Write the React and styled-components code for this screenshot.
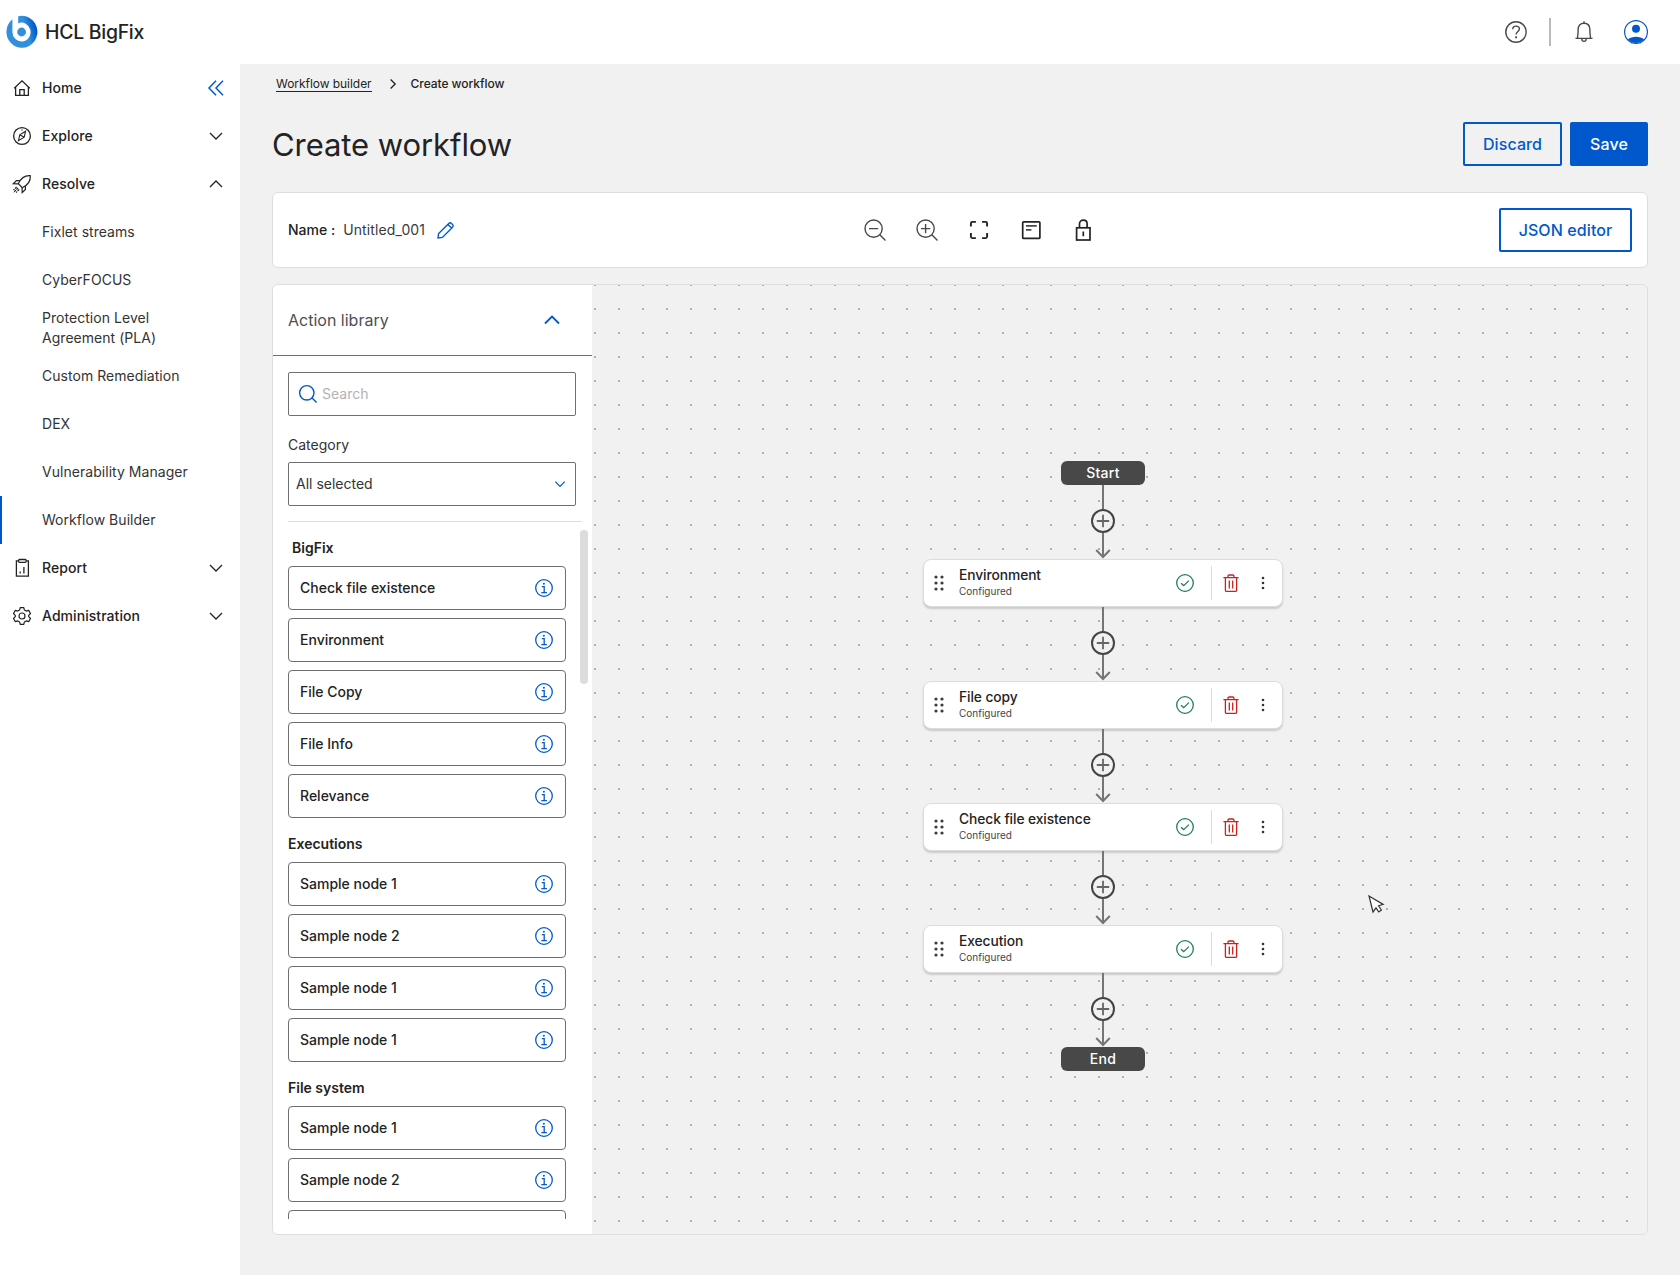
import React from "react";
import styled, { createGlobalStyle, css } from "styled-components";

const blue = "#0059cc";
const dark = "#232323";

const GlobalStyle = createGlobalStyle`
  * {
    box-sizing: border-box;
  }
  body {
    margin: 0;
    background: #f1f1f1;
    color: ${dark};
    font-family: Inter, "Liberation Sans", sans-serif;
    font-size: 14px;
    line-height: 20px;
  }
  svg {
    display: block;
    flex-shrink: 0;
    overflow: visible;
  }
`;

const Page = styled.div`
  height: 1275px;
  display: flex;
  flex-direction: column;
  overflow: hidden;
`;

const Header = styled.header`
  height: 64px;
  flex-shrink: 0;
  display: flex;
  align-items: center;
  justify-content: space-between;
  padding: 0 32px 0 6px;
  background: #fff;
`;

const Brand = styled.div`
  display: flex;
  align-items: center;
  gap: 8px;
  font-size: 19.4px;
  font-weight: 450;
  letter-spacing: -0.25px;
`;

const HeaderTools = styled.div`
  display: flex;
  align-items: center;
`;

const HeaderLine = styled.div`
  width: 2px;
  height: 28px;
  margin: 0 24px 0 22px;
  background: #bababa;
`;

const Profile = styled.div`
  margin-left: 31px;
`;

const Body = styled.div`
  flex: 1;
  display: flex;
  min-height: 0;
`;

const Sidebar = styled.nav`
  width: 240px;
  flex-shrink: 0;
  background: #fff;
`;

const NavRow = styled.div`
  height: 48px;
  display: flex;
  align-items: center;
  padding: 0 16px 0 12px;
  font-weight: 500;
`;

const NavLabel = styled.span`
  flex: 1;
  margin-left: 10px;
  letter-spacing: 0.06px;
`;

const NavSub = styled.div`
  height: 48px;
  display: flex;
  align-items: center;
  padding-left: 42px;
  white-space: pre;
  color: #333;
  letter-spacing: 0.04px;
  ${(props) =>
    props.$active &&
    css`
      padding-left: 40px;
      border-left: 2px solid ${blue};
    `}
`;

const Main = styled.main`
  flex: 1;
  min-width: 0;
  padding: 10px 32px 40px;
`;

const Crumbs = styled.div`
  display: flex;
  align-items: center;
  height: 20px;
  padding-left: 4px;
  font-size: 12px;
  letter-spacing: -0.05px;
`;

const CrumbLink = styled.span`
  line-height: 15px;
  border-bottom: 1px solid ${dark};
`;

const CrumbIcon = styled.span`
  margin: 0 15px 0 18px;
`;

const CrumbCurrent = styled.span`
  font-weight: 500;
`;

const TitleRow = styled.div`
  display: flex;
  align-items: center;
  justify-content: space-between;
  height: 44px;
  margin-top: 28px;
`;

const Title = styled.h1`
  margin: 0;
  padding-top: 2px;
  font-size: 31px;
  font-weight: 380;
  line-height: 40px;
  letter-spacing: -0.07px;
`;

const Buttons = styled.div`
  display: flex;
  gap: 8px;
`;

const Button = styled.button`
  width: ${(props) => props.$width}px;
  height: 44px;
  padding: 0;
  border: 2px solid ${blue};
  border-radius: 2px;
  background: ${(props) => (props.$filled ? blue : "transparent")};
  color: ${(props) => (props.$filled ? "#fff" : blue)};
  font-family: inherit;
  font-size: 16px;
  font-weight: 480;
  letter-spacing: 0.1px;
`;

const Toolbar = styled.section`
  display: flex;
  align-items: center;
  height: 76px;
  margin-top: 26px;
  padding: 0 15px;
  border: 1px solid #dedede;
  border-radius: 6px;
  background: #fff;
`;

const NameField = styled.div`
  flex: 1;
  display: flex;
  align-items: center;
`;

const NameLabel = styled.span`
  font-weight: 500;
  margin-right: 8px;
`;

const NameValue = styled.span`
  margin-right: 12px;
  color: #3a3a3a;
  letter-spacing: 0.12px;
`;

const ToolIcons = styled.div`
  display: flex;
  gap: 28px;
  margin-left: 37px;
`;

const ToolRight = styled.div`
  flex: 1;
  display: flex;
  justify-content: flex-end;
`;

const Workspace = styled.section`
  display: flex;
  height: 951px;
  margin-top: 16px;
  border: 1px solid #dedede;
  border-radius: 6px;
  overflow: hidden;
`;

const Library = styled.aside`
  width: 319px;
  flex-shrink: 0;
  background: #fff;
`;

const LibraryHeader = styled.div`
  display: flex;
  align-items: center;
  justify-content: space-between;
  height: 71px;
  padding: 0 32px 0 15px;
  border-bottom: 1px solid #6f6f6f;
  color: #4f4f4f;
  font-size: 16px;
`;

const Filters = styled.div`
  width: 294px;
  margin-left: 15px;
  padding: 16px 6px 15px 0;
  border-bottom: 1px solid #dedede;
`;

const Field = styled.div`
  display: flex;
  align-items: center;
  height: 44px;
  border: 1px solid #6f6f6f;
  border-radius: 2px;
`;

const SearchField = styled(Field)`
  gap: 5px;
  padding-left: 10px;
  color: #b3b3b3;
`;

const SelectField = styled(Field)`
  justify-content: space-between;
  padding: 0 10px 0 7px;
  color: #333;
`;

const FieldLabel = styled.div`
  margin: 19px 0 7px;
  color: #333;
`;

const ListWrap = styled.div`
  display: flex;
  justify-content: space-between;
  height: 697px;
  padding: 0 4px 0 15px;
`;

const List = styled.div`
  width: 278px;
  overflow: hidden;
`;

const Scrollbar = styled.div`
  width: 8px;
  height: 154px;
  margin-top: 8px;
  border-radius: 4px;
  background: #dcdcdc;
`;

const GroupTitle = styled.div`
  padding: 16px 0 8px ${(props) => props.$indent || 0}px;
  font-weight: 560;
`;

const Action = styled.div`
  display: flex;
  align-items: center;
  justify-content: space-between;
  height: 44px;
  padding: 0 12px 0 11px;
  border: 1px solid #6f6f6f;
  border-radius: 4px;
  font-weight: 500;

  & + & {
    margin-top: 8px;
  }
`;

const Canvas = styled.div`
  position: relative;
  flex: 1;
  display: flex;
  justify-content: center;
  padding-top: 176px;
  background-color: #f1f1f1;
  background-image: radial-gradient(
    circle at 3px 12px,
    #b0b0b0 0.9px,
    transparent 1.4px
  );
  background-size: 24px 24px;
  background-position: 0 -12px;
`;

const Flow = styled.div`
  display: flex;
  flex-direction: column;
  align-items: center;
  margin-right: 33px;
`;

const Terminal = styled.div`
  width: 84px;
  height: 24px;
  border-radius: 6px;
  background: #484848;
  color: #fff;
  font-weight: 480;
  line-height: 24px;
  text-align: center;
  letter-spacing: 0.3px;
`;

const Node = styled.div`
  width: 360px;
  height: 48px;
  display: flex;
  align-items: center;
  padding-left: 10px;
  border: 1px solid #dcdcdc;
  border-radius: 8px;
  background: #fff;
  box-shadow: 0 2px 2px rgba(0, 0, 0, 0.16);
`;

const NodeText = styled.div`
  width: 217px;
  margin-left: 15px;
  padding-bottom: 2px;
`;

const NodeName = styled.div`
  font-size: 13.8px;
  font-weight: 450;
  line-height: 18px;
  letter-spacing: -0.08px;
`;

const NodeStatus = styled.div`
  color: #454545;
  font-size: 10px;
  line-height: 14px;
`;

const NodeLine = styled.div`
  width: 1px;
  height: 34px;
  margin: 0 11px 0 17px;
  background: #dcdcdc;
`;

const NodeMenu = styled.div`
  margin-left: 22px;
`;

const Cursor = styled.div`
  position: absolute;
  left: 776px;
  top: 610px;
`;

const Svg = ({ w, h = w, color = dark, stroke = 1.3, children }) => (
  <svg
    width={w}
    height={h}
    viewBox={`0 0 ${w} ${h}`}
    fill="none"
    stroke={color}
    strokeWidth={stroke}
  >
    {children}
  </svg>
);

const Logo = () => (
  <svg width="31" height="32" viewBox="0 0 31 32">
    <defs>
      <linearGradient id="brand" x1="0" y1="0.3" x2="1" y2="0">
        <stop offset="0.55" stopColor="#338fdc" />
        <stop offset="0.85" stopColor="#0059cc" />
      </linearGradient>
    </defs>
    <path
      d="M12.2 0.3A15.5 16 0 1 1 6.4 3.2V16A9.1 9.4 0 1 0 12.2 7.3Z"
      fill="url(#brand)"
    />
    <circle cx="15.6" cy="16" r="4.4" fill="#338fdc" />
  </svg>
);

const HelpIcon = () => (
  <Svg w={22} color="#484848" stroke={1.4}>
    <circle cx="11" cy="11" r="10.2" />
    <path d="M7.7 8.3C7.7 6.3 9.1 5.1 11 5.1S14.4 6.3 14.4 8.1C14.4 10.6 11.1 10.4 11.1 13.6" />
    <circle cx="11.1" cy="16.3" r="1.1" fill="#484848" stroke="none" />
  </Svg>
);

const BellIcon = () => (
  <Svg w={18} h={22} color="#484848" stroke={1.4}>
    <path d="M0.5 17.4H17.5M2.6 17.2V15.3C3.2 14 3.1 12 3.1 8.6C3.1 4.8 5.3 2.3 9 2.3S14.9 4.8 14.9 8.6C14.9 12 14.8 14 15.4 15.3V17.2M9 0.3V2.2" />
    <path d="M6.8 17.7C6.8 21.2 11.2 21.2 11.2 17.7" />
  </Svg>
);

const UserIcon = () => (
  <Svg w={24} color={blue} stroke={1.2}>
    <circle cx="12" cy="12" r="11.4" />
    <circle cx="12" cy="8.8" r="4" fill={blue} stroke="none" />
    <path
      d="M3.8 19.4C5.8 17.7 8.8 16.8 12 16.8S18.2 17.7 20.2 19.4A11.4 11.4 0 0 1 3.8 19.4Z"
      fill={blue}
      stroke="none"
    />
  </Svg>
);

const HomeIcon = () => (
  <Svg w={20}>
    <path d="M2.2 10.2L10 2.8L17.8 10.2M3.6 9V17.3H16.4V9M7.8 17.2V11.6H12.2V17.2" />
  </Svg>
);

const CompassIcon = () => (
  <Svg w={20}>
    <circle cx="10" cy="10" r="8.4" />
    <path d="M13.5 5.3L7.8 8.9L6.5 14.7L12.2 11.1ZM8 9L12 11" strokeWidth="1.1" />
    <path d="M10 3.5V4.6" />
  </Svg>
);

const RocketIcon = () => (
  <Svg w={20} stroke={1.2}>
    <path d="M18.3 1.7C13.5 1.3 9.4 3.2 6.3 9.7L10.3 13.7C16.8 10.6 18.7 6.5 18.3 1.7Z" />
    <path d="M8 6.6H4.5L1.3 9.8L6.2 9.9M13.4 12V15.5L10.2 18.7L10.1 13.8" />
    <path
      d="M4.6 13L1.5 16.1M6 14L1.5 18.5M7.2 15.4L4.1 18.5"
      strokeDasharray="2.2 0.9"
    />
  </Svg>
);

const ReportIcon = () => (
  <Svg w={20}>
    <path d="M6.4 2.8H4.4V18.2H16.4V2.8H14.4" />
    <rect x="6.6" y="1.5" width="7.6" height="2.8" rx="1" />
    <path d="M8.2 13.4V15.6M11.9 9V15.6" />
  </Svg>
);

const GearIcon = () => (
  <Svg w={20} stroke={1.2}>
    <circle cx="10" cy="10" r="3" />
    <path
      strokeLinejoin="round"
      d="M8.2 1.6H11.8L12.4 4.1L14.2 5.1L16.7 4.4L18.5 7.5L16.7 9.3V10.7L18.5 12.5L16.7 15.6L14.2 14.9L12.4 15.9L11.8 18.4H8.2L7.6 15.9L5.8 14.9L3.3 15.6L1.5 12.5L3.3 10.7V9.3L1.5 7.5L3.3 4.4L5.8 5.1L7.6 4.1Z"
    />
  </Svg>
);

const Chevron = ({ w = 16, size = 6, up, color, stroke }) => (
  <Svg w={w} color={color} stroke={stroke}>
    <path
      d={
        up
          ? `M${w / 2 - size} ${w / 2 + size / 2}L${w / 2} ${w / 2 - size / 2}L${w / 2 + size} ${w / 2 + size / 2}`
          : `M${w / 2 - size} ${w / 2 - size / 2}L${w / 2} ${w / 2 + size / 2}L${w / 2 + size} ${w / 2 - size / 2}`
      }
    />
  </Svg>
);

const CollapseIcon = () => (
  <Svg w={16} color={blue} stroke={1.5}>
    <path d="M8 0.8L1 8L8 15.2M15 0.8L8 8L15 15.2" />
  </Svg>
);

const PencilIcon = () => (
  <Svg w={17} color={blue} stroke={1.4}>
    <path d="M1 16L1.6 11.6L11.8 1.4C12.6 0.6 13.6 0.6 14.4 1.4L15.6 2.6C16.4 3.4 16.4 4.4 15.6 5.2L5.4 15.4ZM10.9 2.4L14.6 6.1" />
  </Svg>
);

const ZoomIcon = ({ plus }) => (
  <Svg w={24} color="#484848" stroke={1.4}>
    <circle cx="10.6" cy="10.6" r="8.6" />
    <path d="M16.8 16.8L22.5 22.6M6 10.6H15.2" />
    {plus && <path d="M10.6 6V15.2" />}
  </Svg>
);

const FitIcon = () => (
  <Svg w={24} stroke={1.9}>
    <path d="M3.9 8.6V5.4Q3.9 3.9 5.4 3.9H8.9M15.1 3.9H18.6Q20.1 3.9 20.1 5.4V8.6M20.1 15.1V18.6Q20.1 20.1 18.6 20.1H15.1M8.9 20.1H5.4Q3.9 20.1 3.9 18.6V15.1" />
  </Svg>
);

const NoteIcon = () => (
  <Svg w={24} stroke={1.7}>
    <rect x="3.7" y="3.8" width="17.2" height="16.6" rx="1" />
    <path d="M7 7.9H17.8M7 11.8H12.4" stroke="#484848" />
  </Svg>
);

const LockIcon = () => (
  <Svg w={24} stroke={1.7}>
    <rect x="5.6" y="9.8" width="13.4" height="12.2" />
    <path d="M8.5 9.8V5.8C8.5 1 16.1 1 16.1 5.8V9.8M12.3 13.6V18.2" />
  </Svg>
);

const SearchIcon = () => (
  <Svg w={18} color={blue} stroke={1.4}>
    <circle cx="7.8" cy="7.8" r="7.2" />
    <path d="M12.8 12.8L17.6 17.4" />
  </Svg>
);

const InfoIcon = () => (
  <Svg w={18} color={blue} stroke={1.3}>
    <circle cx="9" cy="9" r="8.3" />
    <path d="M6.8 7.6H9.2V13.6M6.3 13.6H11.9" />
    <circle cx="8.9" cy="4.7" r="1" fill={blue} stroke="none" />
  </Svg>
);

const DragIcon = () => (
  <svg width="10" height="16" viewBox="0 0 10 16" fill="#3c3c3c">
    {[2, 8].map((x) =>
      [2, 8, 14].map((y) => <circle key={`${x}-${y}`} cx={x} cy={y} r="1.6" />)
    )}
  </svg>
);

const CheckIcon = () => (
  <Svg w={18} color="#1f7f5c">
    <circle cx="9" cy="9" r="8.3" />
    <path d="M5 9.2L7.7 11.6L12.9 6.6" />
  </Svg>
);

const TrashIcon = () => (
  <Svg w={16} h={18} color="#c9211e">
    <path d="M0.4 3.7H15.6M5 3.5V2.2Q5 1 6.2 1H9.8Q11 1 11 2.2V3.5M2.4 3.9V16.2Q2.4 17.4 3.6 17.4H12.4Q13.6 17.4 13.6 16.2V3.9M6.3 6.6V14.4M9.7 6.6V14.4" />
  </Svg>
);

const KebabIcon = () => (
  <svg width="4" height="14" viewBox="0 0 4 14" fill="#333">
    <circle cx="2" cy="2" r="1.3" />
    <circle cx="2" cy="7" r="1.3" />
    <circle cx="2" cy="12" r="1.3" />
  </svg>
);

const Connector = () => (
  <Svg w={24} h={74} color="#757575" stroke={2}>
    <path d="M12 0V24M12 48V72M5.2 65L12 72L18.8 65" />
    <circle cx="12" cy="36" r="11" fill="#f1f1f1" stroke="#444" />
    <path d="M5.8 36H18.2M12 29.8V42.2" stroke="#666" strokeWidth="1.8" />
  </Svg>
);

const CursorIcon = () => (
  <Svg w={17} h={20} color="#333" stroke={1.2}>
    <path
      d="M1 1L15.2 9.4L10.6 10.8L13.4 15L10.8 17L8 12.8L5 17Z"
      fill="#fff"
    />
  </Svg>
);

const resolveItems = [
  "Fixlet streams",
  "CyberFOCUS",
  "Protection Level\nAgreement (PLA)",
  "Custom Remediation",
  "DEX",
  "Vulnerability Manager",
  "Workflow Builder",
];

const groups = [
  {
    title: "BigFix",
    indent: 4,
    items: [
      "Check file existence",
      "Environment",
      "File Copy",
      "File Info",
      "Relevance",
    ],
  },
  {
    title: "Executions",
    items: ["Sample node 1", "Sample node 2", "Sample node 1", "Sample node 1"],
  },
  {
    title: "File system",
    items: ["Sample node 1", "Sample node 2", ""],
  },
];

const nodes = ["Environment", "File copy", "Check file existence", "Execution"];

const NavItem = ({ icon, label, children }) => (
  <NavRow>
    {icon}
    <NavLabel>{label}</NavLabel>
    {children}
  </NavRow>
);

const App = () => {
  return (
    <Page>
      <GlobalStyle />
      <Header>
        <Brand>
          <Logo />
          HCL BigFix
        </Brand>
        <HeaderTools>
          <HelpIcon />
          <HeaderLine />
          <BellIcon />
          <Profile>
            <UserIcon />
          </Profile>
        </HeaderTools>
      </Header>

      <Body>
        <Sidebar>
          <NavItem icon={<HomeIcon />} label="Home">
            <CollapseIcon />
          </NavItem>
          <NavItem icon={<CompassIcon />} label="Explore">
            <Chevron />
          </NavItem>
          <NavItem icon={<RocketIcon />} label="Resolve">
            <Chevron up />
          </NavItem>
          {resolveItems.map((item) => (
            <NavSub key={item} $active={item === "Workflow Builder"}>
              {item}
            </NavSub>
          ))}
          <NavItem icon={<ReportIcon />} label="Report">
            <Chevron />
          </NavItem>
          <NavItem icon={<GearIcon />} label="Administration">
            <Chevron />
          </NavItem>
        </Sidebar>

        <Main>
          <Crumbs>
            <CrumbLink>Workflow builder</CrumbLink>
            <CrumbIcon>
              <Svg w={6} h={10}>
                <path d="M0.6 0.5L5.2 5L0.6 9.5" />
              </Svg>
            </CrumbIcon>
            <CrumbCurrent>Create workflow</CrumbCurrent>
          </Crumbs>

          <TitleRow>
            <Title>Create workflow</Title>
            <Buttons>
              <Button $width={99}>Discard</Button>
              <Button $width={78} $filled>
                Save
              </Button>
            </Buttons>
          </TitleRow>

          <Toolbar>
            <NameField>
              <NameLabel>Name :</NameLabel>
              <NameValue>Untitled_001</NameValue>
              <PencilIcon />
            </NameField>
            <ToolIcons>
              <ZoomIcon />
              <ZoomIcon plus />
              <FitIcon />
              <NoteIcon />
              <LockIcon />
            </ToolIcons>
            <ToolRight>
              <Button $width={133}>JSON editor</Button>
            </ToolRight>
          </Toolbar>

          <Workspace>
            <Library>
              <LibraryHeader>
                Action library
                <Chevron up size={7} color={blue} stroke={1.8} />
              </LibraryHeader>
              <Filters>
                <SearchField>
                  <SearchIcon />
                  Search
                </SearchField>
                <FieldLabel>Category</FieldLabel>
                <SelectField>
                  All selected
                  <Chevron w={10} size={4.7} color={blue} />
                </SelectField>
              </Filters>
              <ListWrap>
                <List>
                  {groups.map((group) => (
                    <div key={group.title}>
                      <GroupTitle $indent={group.indent}>
                        {group.title}
                      </GroupTitle>
                      {group.items.map((item, index) => (
                        <Action key={index}>
                          {item}
                          {item && <InfoIcon />}
                        </Action>
                      ))}
                    </div>
                  ))}
                </List>
                <Scrollbar />
              </ListWrap>
            </Library>

            <Canvas>
              <Flow>
                <Terminal>Start</Terminal>
                <Connector />
                {nodes.map((name) => (
                  <React.Fragment key={name}>
                    <Node>
                      <DragIcon />
                      <NodeText>
                        <NodeName>{name}</NodeName>
                        <NodeStatus>Configured</NodeStatus>
                      </NodeText>
                      <CheckIcon />
                      <NodeLine />
                      <TrashIcon />
                      <NodeMenu>
                        <KebabIcon />
                      </NodeMenu>
                    </Node>
                    <Connector />
                  </React.Fragment>
                ))}
                <Terminal>End</Terminal>
              </Flow>
              <Cursor>
                <CursorIcon />
              </Cursor>
            </Canvas>
          </Workspace>
        </Main>
      </Body>
    </Page>
  );
};

export default App;
